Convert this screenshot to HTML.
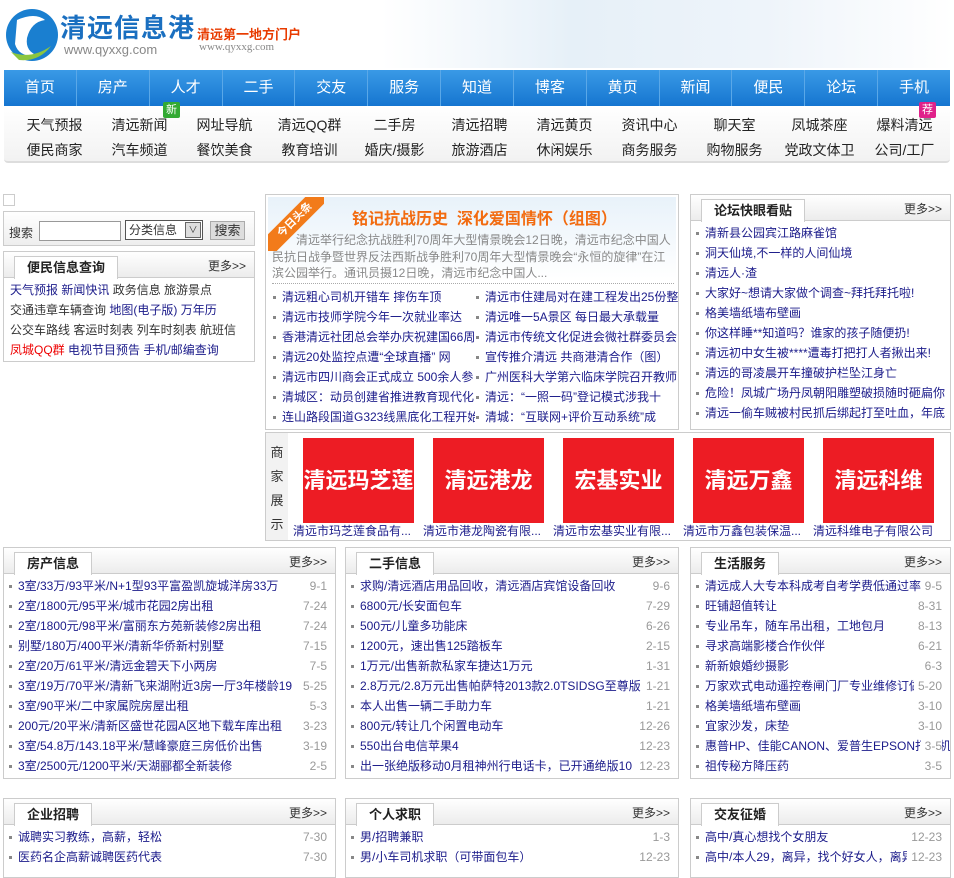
<!DOCTYPE html>
<html><head><meta charset="utf-8">
<style>
*{margin:0;padding:0;box-sizing:border-box}
body{width:954px;height:867px;overflow:hidden;background:#fff;font-family:"Liberation Sans","Noto Sans CJK SC",sans-serif;font-size:12px;color:#333;position:relative}
a{color:#1b1b8a;text-decoration:none}
.abs{position:absolute}
.hdr{left:0;top:0;width:954px;height:68px;background:linear-gradient(90deg,#fff 0%,#fff 40%,#e6f0f8 60%,#eef4fa 80%,#fff 100%)}
.nav{left:4px;top:70px;width:946px;height:36px;background:linear-gradient(#3a9ae6,#1575d0);display:flex}
.nav div{flex:1;color:#fff;font-size:15px;text-align:center;line-height:36px;border-right:1px solid #5aa8e8}
.nav div:last-child{border:none}
.sub{left:4px;top:106px;width:946px;height:57px;background:linear-gradient(#fff,#f2f2f2);border-bottom:2px solid #ddd;border-radius:0 0 4px 4px}
.sub .r{position:absolute;left:8px;display:flex;font-size:14px;color:#222}
.sub .r span{width:85px;text-align:center}
.box{position:absolute;border:1px solid #ccc;background:#fff}
.bh{height:26px;background:linear-gradient(#fff,#ececec);border-bottom:1px solid #ccc;position:relative}
.tab{position:absolute;left:10px;top:4px;height:23px;padding:0 12px;background:#fff;border:1px solid #ccc;border-bottom:none;font-weight:bold;font-size:13px;line-height:22px;color:#222}
.more{position:absolute;right:8px;top:5px;font-size:12px;color:#333}
ul{list-style:none}
li{height:20px;line-height:20px;white-space:nowrap;overflow:hidden;position:relative;padding-left:14px;font-size:12px}
li:before{content:"";position:absolute;left:5px;top:9px;width:3px;height:3px;background:#888}
li i{position:absolute;right:8px;top:0;font-style:normal;color:#999;background:#fff;padding-left:4px}
.biz{width:111px;height:85px;background:#ed1c24;color:#fff;font-weight:bold;font-size:22px;text-align:center;line-height:85px}
</style></head><body>
<div class="abs hdr"></div>
<svg class="abs" style="left:5px;top:8px" width="55" height="55" viewBox="0 0 55 55"><circle cx="27" cy="27" r="26" fill="#1a7fd0"/><path d="M12 12 Q30 4 40 12 Q26 14 22 30 Q20 44 34 48 Q14 50 10 36 Z" fill="#fff"/><path d="M6 44 Q26 52 46 38 Q34 54 14 52 Z" fill="#8cc63f"/></svg>
<div class="abs" style="left:60px;top:8px;font-size:26px;font-weight:bold;color:#1a6fc0;letter-spacing:1px">清远信息港</div>
<div class="abs" style="left:64px;top:42px;font-size:13px;color:#888">www.qyxxg.com</div>
<div class="abs" style="left:197px;top:24px;font-size:13px;color:#e83b00;font-weight:bold">清远第一地方门户</div>
<div class="abs" style="left:199px;top:41px;font-size:11px;color:#888;font-family:'Liberation Serif',serif">www.qyxxg.com</div>
<div class="abs nav"><div>首页</div><div>房产</div><div>人才</div><div>二手</div><div>交友</div><div>服务</div><div>知道</div><div>博客</div><div>黄页</div><div>新闻</div><div>便民</div><div>论坛</div><div>手机</div></div>
<div class="abs sub">
<div class="r" style="top:9px"><span>天气预报</span><span>清远新闻</span><span>网址导航</span><span>清远QQ群</span><span>二手房</span><span>清远招聘</span><span>清远黄页</span><span>资讯中心</span><span>聊天室</span><span>凤城茶座</span><span>爆料清远</span></div>
<div class="r" style="top:34px"><span>便民商家</span><span>汽车频道</span><span>餐饮美食</span><span>教育培训</span><span>婚庆/摄影</span><span>旅游酒店</span><span>休闲娱乐</span><span>商务服务</span><span>购物服务</span><span>党政文体卫</span><span>公司/工厂</span></div>
</div>
<div class="abs" style="left:163px;top:102px;width:17px;height:16px;background:#3a3;color:#fff;font-size:11px;text-align:center;line-height:16px;border-radius:2px">新</div>
<div class="abs" style="left:919px;top:102px;width:17px;height:16px;background:#e0218a;color:#fff;font-size:11px;text-align:center;line-height:16px;border-radius:2px">荐</div>

<div class="abs" style="left:3px;top:194px;width:12px;height:12px;border:1px solid #ccc"></div>
<div class="box" style="left:3px;top:211px;width:252px;height:35px;background:linear-gradient(#fff,#eee)">
<span class="abs" style="left:5px;top:12px;font-size:12px">搜索</span>
<div class="abs" style="left:35px;top:9px;width:82px;height:20px;border:1px solid #999;background:#fff"></div>
<div class="abs" style="left:121px;top:8px;width:78px;height:20px;border:1px solid #555;background:#fff;font-size:12px;line-height:18px;padding-left:3px">分类信息<span style="position:absolute;right:1px;top:1px;width:16px;height:16px;border:1px solid #666;background:#ddd;text-align:center;line-height:14px;font-size:9px">∨</span></div>
<div class="abs" style="left:206px;top:9px;width:35px;height:19px;background:#ddd;border:1px solid #aaa;font-size:13px;text-align:center;line-height:17px">搜索</div>
</div>
<div class="box" style="left:3px;top:251px;width:252px;height:111px">
<div class="bh"><div class="tab">便民信息查询</div><div class="more">更多&gt;&gt;</div></div>
<div style="padding:2px 6px;font-size:12px;line-height:20px;color:#333">
<a>天气预报</a> <a>新闻快讯</a> 政务信息 旅游景点<br>交通违章车辆查询 <a>地图(电子版)</a> <a>万年历</a><br>公交车路线 客运时刻表 列车时刻表 航班信<br><span style="color:#e00">凤城QQ群</span> <a>电视节目预告</a> <a>手机/邮编查询</a></div>
</div>

<div class="box" style="left:265px;top:194px;width:414px;height:236px">
<div class="abs" style="left:2px;top:2px;width:408px;height:82px;background:linear-gradient(#e8f2fa,#fff)"></div>
<div class="abs" style="left:2px;top:2px;width:56px;height:54px;overflow:hidden"><div style="position:absolute;left:-18px;top:14px;width:90px;height:18px;background:#f27b1a;color:#fff;font-size:11px;font-weight:bold;text-align:center;line-height:18px;transform:rotate(-45deg)">今日头条</div></div>
<div class="abs" style="left:86px;top:10px;font-size:16px;font-weight:bold;color:#f26b10">铭记抗战历史&nbsp;&nbsp;深化爱国情怀（组图）</div>
<div class="abs" style="left:6px;top:37px;width:402px;font-size:12px;line-height:16.5px;color:#888;text-indent:24px">清远举行纪念抗战胜利70周年大型情景晚会12日晚，清远市纪念中国人民抗日战争暨世界反法西斯战争胜利70周年大型情景晚会“永恒的旋律”在江滨公园举行。通讯员摄12日晚，清远市纪念中国人...</div>
<div class="abs" style="left:6px;top:88px;width:402px;border-top:1px dotted #aaa"></div>
<ul class="abs" style="left:2px;top:92px;width:207px">
<li><a>清远粗心司机开错车 摔伤车顶</a></li><li><a>清远市技师学院今年一次就业率达</a></li><li><a>香港清远社团总会举办庆祝建国66周</a></li><li><a>清远20处监控点遭“全球直播” 网</a></li><li><a>清远市四川商会正式成立 500余人参</a></li><li><a>清城区：动员创建省推进教育现代化</a></li><li><a>连山路段国道G323线黑底化工程开始</a></li></ul>
<ul class="abs" style="left:205px;top:92px;width:207px">
<li><a>清远市住建局对在建工程发出25份整</a></li><li><a>清远唯一5A景区 每日最大承载量</a></li><li><a>清远市传统文化促进会微社群委员会</a></li><li><a>宣传推介清远 共商港清合作（图）</a></li><li><a>广州医科大学第六临床学院召开教师</a></li><li><a>清远：“一照一码”登记模式涉我十</a></li><li><a>清城：“互联网+评价互动系统”成</a></li></ul>
</div>

<div class="box" style="left:690px;top:194px;width:261px;height:236px">
<div class="bh"><div class="tab">论坛快眼看贴</div><div class="more">更多&gt;&gt;</div></div>
<ul style="padding-top:2px"><li><a>清新县公园宾江路麻雀馆</a></li><li><a>洞天仙境,不一样的人间仙境</a></li><li><a>清远人·渣</a></li><li><a>大家好~想请大家做个调查~拜托拜托啦!</a></li><li><a>格美墙纸墙布壁画</a></li><li><a>你这样睡**知道吗？谁家的孩子随便扔!</a></li><li><a>清远初中女生被****遭毒打把打人者揪出来!</a></li><li><a>清远的哥凌晨开车撞破护栏坠江身亡</a></li><li><a>危险！凤城广场丹凤朝阳雕塑破损随时砸扁你</a></li><li><a>清远一偷车贼被村民抓后绑起打至吐血，年底</a></li></ul>
</div>

<div class="box" style="left:265px;top:432px;width:686px;height:109px">
<div class="abs" style="left:0;top:0;width:22px;height:107px;background:#f2f2f2;font-size:13px;line-height:24px;text-align:center;padding-top:8px;color:#333">商<br>家<br>展<br>示</div>
<div class="abs" style="left:37px;top:5px;display:flex;gap:19px"><div class="biz">清远玛芝莲</div><div class="biz">清远港龙</div><div class="biz">宏基实业</div><div class="biz">清远万鑫</div><div class="biz">清远科维</div></div>
<div class="abs" style="left:27px;top:89px;display:flex;font-size:12px;white-space:nowrap"><a style="width:130px;overflow:hidden">清远市玛芝莲食品有...</a><a style="width:130px;overflow:hidden">清远市港龙陶瓷有限...</a><a style="width:130px;overflow:hidden">清远市宏基实业有限...</a><a style="width:130px;overflow:hidden">清远市万鑫包装保温...</a><a style="width:130px">清远科维电子有限公司</a></div>
</div>

<div class="box" style="left:3px;top:547px;width:333px;height:232px">
<div class="bh"><div class="tab">房产信息</div><div class="more">更多&gt;&gt;</div></div>
<ul style="padding-top:2px"><li><a>3室/33万/93平米/N+1型93平富盈凯旋城洋房33万</a><i>9-1</i></li><li><a>2室/1800元/95平米/城市花园2房出租</a><i>7-24</i></li><li><a>2室/1800元/98平米/富丽东方苑新装修2房出租</a><i>7-24</i></li><li><a>别墅/180万/400平米/清新华侨新村别墅</a><i>7-15</i></li><li><a>2室/20万/61平米/清远金碧天下小两房</a><i>7-5</i></li><li><a>3室/19万/70平米/清新飞来湖附近3房一厅3年楼龄19</a><i>5-25</i></li><li><a>3室/90平米/二中家属院房屋出租</a><i>5-3</i></li><li><a>200元/20平米/清新区盛世花园A区地下载车库出租</a><i>3-23</i></li><li><a>3室/54.8万/143.18平米/慧峰豪庭三房低价出售</a><i>3-19</i></li><li><a>3室/2500元/1200平米/天湖郦都全新装修</a><i>2-5</i></li></ul>
</div>
<div class="box" style="left:345px;top:547px;width:334px;height:232px">
<div class="bh"><div class="tab">二手信息</div><div class="more">更多&gt;&gt;</div></div>
<ul style="padding-top:2px"><li><a>求购/清远酒店用品回收，清远酒店宾馆设备回收</a><i>9-6</i></li><li><a>6800元/长安面包车</a><i>7-29</i></li><li><a>500元/儿童多功能床</a><i>6-26</i></li><li><a>1200元，速出售125踏板车</a><i>2-15</i></li><li><a>1万元/出售新款私家车捷达1万元</a><i>1-31</i></li><li><a>2.8万元/2.8万元出售帕萨特2013款2.0TSIDSG至尊版</a><i>1-21</i></li><li><a>本人出售一辆二手助力车</a><i>1-21</i></li><li><a>800元/转让几个闲置电动车</a><i>12-26</i></li><li><a>550出台电信苹果4</a><i>12-23</i></li><li><a>出一张绝版移动0月租神州行电话卡，已开通绝版10</a><i>12-23</i></li></ul>
</div>
<div class="box" style="left:690px;top:547px;width:261px;height:232px">
<div class="bh"><div class="tab">生活服务</div><div class="more">更多&gt;&gt;</div></div>
<ul style="padding-top:2px"><li><a>清远成人大专本科成考自考学费低通过率</a><i>9-5</i></li><li><a>旺铺超值转让</a><i>8-31</i></li><li><a>专业吊车，随车吊出租，工地包月</a><i>8-13</i></li><li><a>寻求高端影楼合作伙伴</a><i>6-21</i></li><li><a>新新娘婚纱摄影</a><i>6-3</i></li><li><a>万家欢式电动遥控卷闸门厂专业维修订做</a><i>5-20</i></li><li><a>格美墙纸墙布壁画</a><i>3-10</i></li><li><a>宜家沙发，床垫</a><i>3-10</i></li><li><a>惠普HP、佳能CANON、爱普生EPSON打印机</a><i>3-5</i></li><li><a>祖传秘方降压药</a><i>3-5</i></li></ul>
</div>

<div class="box" style="left:3px;top:798px;width:333px;height:80px">
<div class="bh"><div class="tab">企业招聘</div><div class="more">更多&gt;&gt;</div></div>
<ul style="padding-top:2px"><li><a>诚聘实习教练，高薪，轻松</a><i>7-30</i></li><li><a>医药名企高薪诚聘医药代表</a><i>7-30</i></li></ul>
</div>
<div class="box" style="left:345px;top:798px;width:334px;height:80px">
<div class="bh"><div class="tab">个人求职</div><div class="more">更多&gt;&gt;</div></div>
<ul style="padding-top:2px"><li><a>男/招聘兼职</a><i>1-3</i></li><li><a>男/小车司机求职（可带面包车）</a><i>12-23</i></li></ul>
</div>
<div class="box" style="left:690px;top:798px;width:261px;height:80px">
<div class="bh"><div class="tab">交友征婚</div><div class="more">更多&gt;&gt;</div></div>
<ul style="padding-top:2px"><li><a>高中/真心想找个女朋友</a><i>12-23</i></li><li><a>高中/本人29，离异，找个好女人，离异</a><i>12-23</i></li></ul>
</div>
</body></html>
